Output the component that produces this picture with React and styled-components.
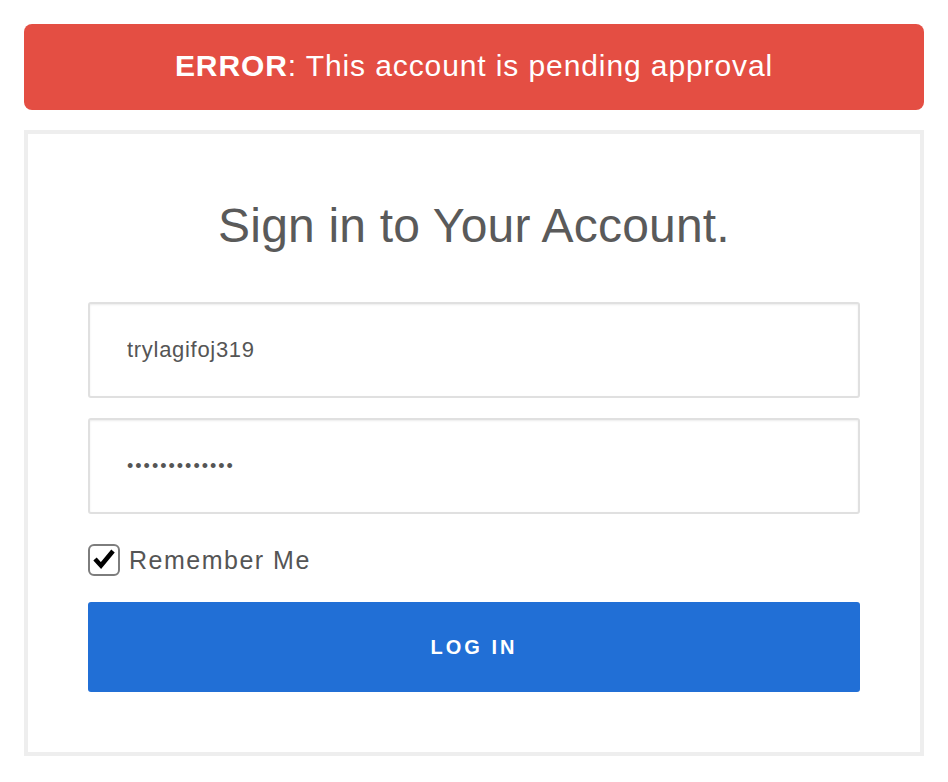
import React from "react";
import styled, { createGlobalStyle } from "styled-components";

const Global = createGlobalStyle`
  html, body { margin: 0; padding: 0; background: #fff; }
  body { font-family: "Liberation Sans", Arial, sans-serif; }
  * { box-sizing: border-box; }
`;

const Page = styled.div`
  padding: 24px;
  display: flex;
  flex-direction: column;
  gap: 20px;
`;

const Banner = styled.div`
  height: 86px;
  background: #e44e43;
  border-radius: 8px;
  color: #fff;
  display: flex;
  align-items: center;
  justify-content: center;
  font-size: 30px;
  letter-spacing: 0.9px;
  padding-bottom: 2px;
  strong { font-weight: 700; }
`;

const Card = styled.div`
  border: 4px solid #eeeeee;
  padding: 62px 60px 60px;
  display: flex;
  flex-direction: column;
`;

const Title = styled.h1`
  margin: 0 0 46px;
  font-weight: 400;
  font-size: 48px;
  line-height: 60px;
  color: #5a5a5a;
  text-align: center;
  letter-spacing: 0.2px;
`;

const Field = styled.input`
  height: 96px;
  width: 100%;
  border: 2px solid #e0e0e0;
  border-radius: 3px;
  box-shadow: inset 0 1px 2px rgba(0, 0, 0, 0.08);
  padding: 0 37px;
  font-family: "Liberation Sans", Arial, sans-serif;
  font-size: ${(p) => (p.type === "password" ? "18px" : "22px")};
  letter-spacing: ${(p) => (p.type === "password" ? "2px" : "0.7px")};
  color: #555;
  outline: none;
  margin-bottom: ${(p) => p.$gap}px;
  background: #fff;
`;

const CheckRow = styled.label`
  display: flex;
  align-items: center;
  gap: 9px;
  height: 32px;
  margin-bottom: 26px;
  font-size: 25px;
  letter-spacing: 1.5px;
  color: #555;
`;

const Box = styled.span`
  width: 32px;
  height: 32px;
  flex: none;
  border: 2px solid #7d7d7d;
  border-radius: 6px;
  background: #fff;
  display: flex;
`;

const Button = styled.button`
  height: 90px;
  width: 100%;
  border: none;
  border-radius: 3px;
  background: #216fd6;
  color: #fff;
  font-family: "Liberation Sans", Arial, sans-serif;
  font-weight: 700;
  font-size: 20px;
  letter-spacing: 3px;
  cursor: pointer;
`;

export default function App() {
  return (
    <>
      <Global />
      <Page>
        <Banner>
          <span>
            <strong>ERROR</strong>: This account is pending approval
          </span>
        </Banner>
        <Card>
          <Title>Sign in to Your Account.</Title>
          <Field type="text" defaultValue="trylagifoj319" readOnly $gap={20} />
          <Field type="password" defaultValue="abcdefghijklm" readOnly $gap={30} />
          <CheckRow>
            <Box>
              <svg width="28" height="28" viewBox="0 0 28 28">
                <path d="M5 13 L11 19.5 L23 5" fill="none" stroke="#000" strokeWidth="4.5" strokeLinecap="butt" strokeLinejoin="miter" />
              </svg>
            </Box>
            Remember Me
          </CheckRow>
          <Button>LOG IN</Button>
        </Card>
      </Page>
    </>
  );
}
